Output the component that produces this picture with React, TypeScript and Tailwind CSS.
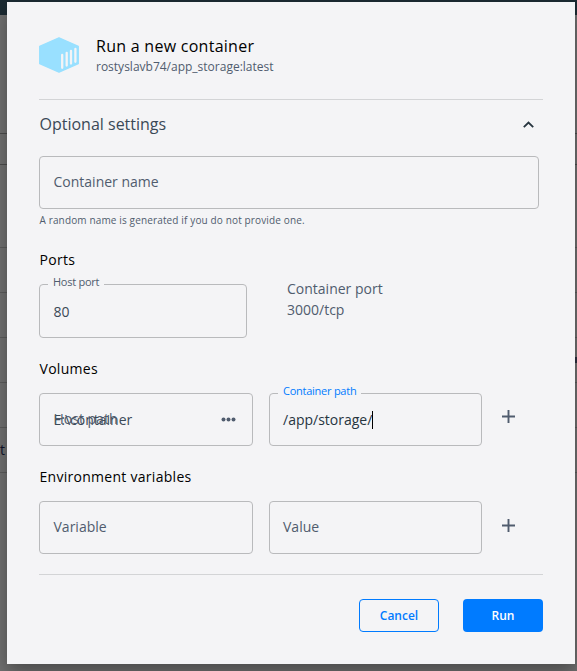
import type { ReactNode } from "react";

const rowLines = [
  { id: 1, cls: "top-[133px] bg-[#4c4c4c]" },
  { id: 2, cls: "top-[164px] bg-[#4c4c4c]" },
  { id: 3, cls: "top-[247px] bg-[#5c5c5c]" },
  { id: 4, cls: "top-[292px] bg-[#5c5c5c]" },
  { id: 5, cls: "top-[337px] bg-[#5c5c5c]" },
  { id: 6, cls: "top-[382px] bg-[#5c5c5c]" },
  { id: 7, cls: "top-[427px] bg-[#5c5c5c]" },
  { id: 8, cls: "top-[472px] bg-[#5c5c5c]" },
];

function Backdrop() {
  return (
    <div className="absolute inset-0 overflow-hidden bg-[#717171]">
      <div className="h-[15px] bg-[#1c2b33]" />
      {rowLines.map((l) => (
        <div key={l.id} className={`absolute left-0 h-px w-full ${l.cls}`} />
      ))}
      <span className="absolute top-[440px] left-0 text-[14px] leading-5 text-[#10132a]">t</span>
      <span className="absolute top-[357px] left-[575px] h-[6px] w-[2px] bg-[#2c3040]" />
    </div>
  );
}

function Field({
  className,
  label,
  labelClass = "",
  children,
}: {
  className: string;
  label?: string;
  labelClass?: string;
  children?: ReactNode;
}) {
  return (
    <div
      className={`relative flex shrink-0 items-center rounded-[4px] border border-[#b9babc] pl-[13.5px] text-[14px] leading-5 ${className}`}
    >
      {label && (
        <span
          className={`absolute left-[8px] bg-[#f4f4f6] px-[5px] text-[11px] leading-3 tracking-[-0.25px] whitespace-nowrap ${labelClass}`}
        >
          {label}
        </span>
      )}
      {children}
    </div>
  );
}

function SectionTitle({ className, children }: { className: string; children: ReactNode }) {
  return (
    <h3 className={`pl-[0.5px] text-[14px] leading-5 font-medium tracking-[0.28px] text-black ${className}`}>
      {children}
    </h3>
  );
}

function Plus() {
  return (
    <svg className="h-[13px] w-[13px]" viewBox="0 0 13 13" stroke="#505c6e" strokeWidth="1.9">
      <path d="M6.5 0v13M0 6.5h13" />
    </svg>
  );
}

function ContainerIcon() {
  return (
    <svg className="mt-[3px] h-[36px] w-[40px]" viewBox="0 0 40 36">
      <path
        d="M20 .8 39.3 9.3V26.7L20 35.2.7 26.7V9.3Z"
        fill="#99e0ff"
        stroke="#99e0ff"
        strokeWidth="1.3"
        strokeLinejoin="round"
      />
      <path
        d="M23.2 18v12.8M27.7 15.8v12.8M32 13.8v12.8M36.4 12v12.8"
        stroke="#f4f4f6"
        strokeWidth="2.3"
        strokeLinecap="round"
      />
    </svg>
  );
}

export default function App() {
  return (
    <div className="relative h-[671px] w-[577px] overflow-hidden pt-[2px] pl-[7px] font-['Open_Sans','Noto_Sans',sans-serif] text-[#505c6e]">
      <Backdrop />
      <main className="relative flex h-[662px] w-[568px] flex-col bg-[#f4f4f6] px-8 shadow-[0_8px_18px_rgba(0,0,0,0.35)]">
        <header className="flex h-[98px] shrink-0 border-b border-[#d3d4d6] pt-[32px]">
          <ContainerIcon />
          <div className="ml-[17px]">
            <h1 className="text-[16px] leading-6 font-medium tracking-[0.27px] text-black">Run a new container</h1>
            <p className="text-[12px] leading-[18px]">rostyslavb74/app_storage:latest</p>
          </div>
        </header>

        <div className="flex h-[56px] shrink-0 items-center justify-between pb-[8px]">
          <h2 className="pl-[0.5px] text-[16px] leading-6 text-[#3b4957]">Optional settings</h2>
          <svg className="mr-[9px] h-[7px] w-[11px]" viewBox="0 0 11 7" fill="none" stroke="#27353f" strokeWidth="1.8">
            <path d="M.8 6.2 5.5 1.5 10.2 6.2" />
          </svg>
        </div>

        <Field className="h-[53px] w-[500px] pb-[2px]">Container name</Field>
        <p className="mt-[4px] pl-[0.5px] text-[10px] leading-[14px] tracking-[0.14px]">
          A random name is generated if you do not provide one.
        </p>

        <SectionTitle className="mt-[23px]">Ports</SectionTitle>
        <div className="mt-[14px] flex h-[54px] shrink-0">
          <Field
            className="h-[54px] w-[208px] pt-[2px] text-[#3b4957]"
            label="Host port"
            labelClass="-top-[9px] text-[#505c6e]"
          >
            80
          </Field>
          <div className="-mt-[6px] ml-[40px] text-[14px] leading-[21px]">
            <p>Container port</p>
            <p>3000/tcp</p>
          </div>
        </div>

        <SectionTitle className="mt-[21px]">Volumes</SectionTitle>
        <div className="mt-[14px] flex h-[53px] shrink-0">
          <Field className="h-[53px] w-[214px]">
            <span className="text-[#3b4957]">E:\container</span>
            <span className="absolute top-[15px] left-[13.5px]">Host path</span>
            <svg className="absolute top-[23px] left-[181px] h-[5px] w-[15px]" viewBox="0 0 15 5" fill="#505c6e">
              <circle cx="2.5" cy="2.5" r="2" />
              <circle cx="7.5" cy="2.5" r="2" />
              <circle cx="12.5" cy="2.5" r="2" />
            </svg>
          </Field>
          <Field
            className="ml-4 h-[53px] w-[213px] text-[#27353f]"
            label="Container path"
            labelClass="-top-[9px] text-[#007bff]"
          >
            <span className="-ml-[0.5px]">/app/storage/</span>
            <span className="h-[18px] w-px bg-black" />
          </Field>
          <div className="mt-[17px] ml-5">
            <Plus />
          </div>
        </div>

        <SectionTitle className="mt-[21px]">Environment variables</SectionTitle>
        <div className="mt-[14px] flex h-[53px] shrink-0">
          <Field className="h-[53px] w-[214px] pb-[2px]">Variable</Field>
          <Field className="ml-4 h-[53px] w-[213px] pb-[2px]">
            <span className="-ml-[0.5px]">Value</span>
          </Field>
          <div className="mt-[18px] ml-5">
            <Plus />
          </div>
        </div>

        <footer className="mt-5 flex shrink-0 justify-end gap-6 border-t border-[#d3d4d6] pt-6 text-[12px] font-semibold">
          <button className="h-[33px] w-20 rounded-[4px] border border-[#007bff] text-[#007bff]">Cancel</button>
          <button className="h-[33px] w-20 rounded-[4px] bg-[#007bff] text-white">Run</button>
        </footer>
      </main>
    </div>
  );
}
